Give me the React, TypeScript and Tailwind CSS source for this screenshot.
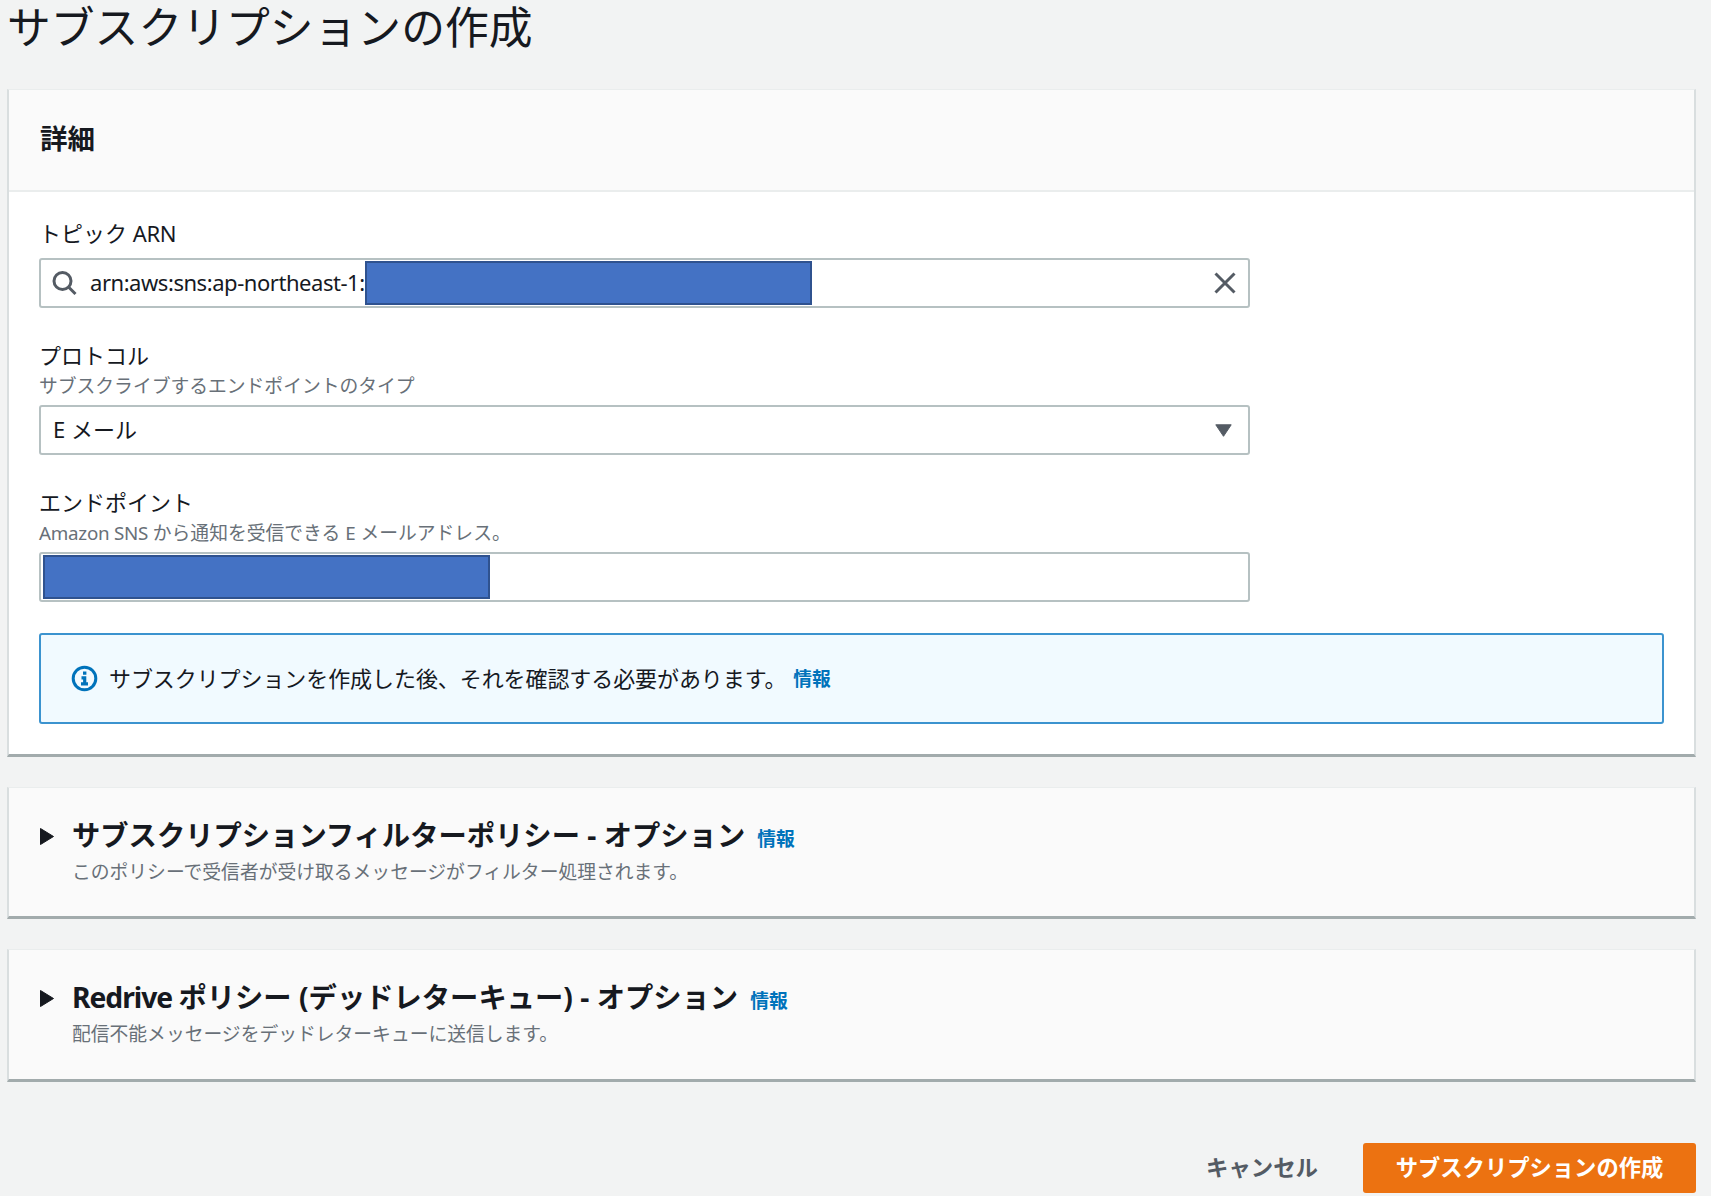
import type { ReactNode } from 'react';

function InfoLink({ className = '' }: { className?: string }) {
  return (
    <a className={`text-[18.8px] font-bold text-[#0073bb] ${className}`} href="#">
      情報
    </a>
  );
}

function Redaction() {
  return <div className="h-[44px] w-[447px] shrink-0 border-2 border-[#2f528f] bg-[#4472c4]" />;
}

function Box({ children, className = '' }: { children?: ReactNode; className?: string }) {
  return (
    <div
      className={`flex h-[50px] w-[1211px] items-center rounded-[3px] border-2 border-[#b6c1c2] bg-white ${className}`}
    >
      {children}
    </div>
  );
}

const cardClass =
  'border-x-2 border-t border-b-[3px] border-x-[#d9dedf] border-t-[#eaeded] border-b-[#a2abac]';

function Expandable({ title, description, className }: { title: ReactNode; description: string; className: string }) {
  return (
    <section className={`flex bg-[#fafafa] pl-[31px] ${cardClass} ${className}`}>
      <svg className="mt-[40px] h-[17px] w-[14px] shrink-0" viewBox="0 0 14 17" fill="#16191f">
        <path d="M.5.5 13.5 8.5.5 16.5Z" stroke="#16191f" strokeLinejoin="round" />
      </svg>
      <div className="ml-[18px] pt-[27px]">
        <div className="flex h-[41px] items-center whitespace-pre">
          <h2 className="text-[28.3px] leading-[41px] font-bold text-[#16191f]">{title}</h2>
          <InfoLink className="ml-[12px] pt-[7px]" />
        </div>
        <p className="text-[18.8px] leading-[32px] text-[#687078]">{description}</p>
      </div>
    </section>
  );
}

export default function App() {
  return (
    <main className="h-[1196px] w-[1711px] overflow-hidden bg-[#f2f3f3] pr-[15px] pl-[7px] font-['Noto_Sans','Noto_Sans_CJK_JP',sans-serif] text-[22px] text-[#16191f]">
      <h1 className="h-[89px] text-[43.8px] leading-[54px] whitespace-nowrap">サブスクリプションの作成</h1>

      <section className={`h-[668px] bg-white ${cardClass}`}>
        <header className="h-[102px] border-b-2 border-[#eaeded] bg-[#fafafa] pl-[31px]">
          <h2 className="text-[27.5px] leading-[97px] font-bold">詳細</h2>
        </header>
        <div className="px-[30px] pt-[25px]">
          <label className="block h-[41px] leading-[32px]">
            トピック <span className="tracking-[-0.4px]">ARN</span>
          </label>
          <Box className="pl-[11px]">
            <svg className="h-[26px] w-[26px] shrink-0" viewBox="0 0 26 26" fill="none" stroke="#545b64" strokeWidth="3">
              <circle cx="10.5" cy="11" r="8.5" />
              <path d="m16.5 17 7 7" />
            </svg>
            <span className="ml-[12px] w-[275px] pb-[2px] tracking-[-0.45px] whitespace-nowrap">
              arn:aws:sns:ap-northeast-1:
            </span>
            <Redaction />
            <svg className="mr-[12px] ml-auto h-[22px] w-[22px]" viewBox="0 0 22 22" stroke="#545b64" strokeWidth="3">
              <path d="m1.5 1.5 19 19m0-19-19 19" />
            </svg>
          </Box>

          <label className="mt-[31px] block h-[33px] leading-[32px]">プロトコル</label>
          <p className="h-[33px] text-[18.8px] leading-[28px] text-[#687078]">サブスクライブするエンドポイントのタイプ</p>
          <Box className="justify-between pr-[16px] pl-[12px]">
            <span className="pb-[2px]">E メール</span>
            <svg className="h-[13px] w-[17px]" viewBox="0 0 17 13" fill="#545b64" stroke="#545b64" strokeLinejoin="round">
              <path d="M.8.8h15.4L8.5 12.3Z" />
            </svg>
          </Box>

          <label className="mt-[31px] block h-[33px] leading-[32px]">エンドポイント</label>
          <p className="h-[33px] text-[18.8px] leading-[28px] text-[#687078]">
            <span className="tracking-[-0.25px]">Amazon SNS </span>から通知を受信できる E メールアドレス。
          </p>
          <Box className="pl-[2px]">
            <Redaction />
          </Box>

          <div className="mt-[31px] flex h-[91px] items-center rounded-[3px] border-2 border-[#3b93cf] bg-[#f1faff] pl-[30px]">
            <svg className="h-[27px] w-[27px]" viewBox="0 0 27 27" fill="none" stroke="#0073bb" strokeWidth="3">
              <circle cx="13.5" cy="13.5" r="11.3" />
              <path d="M12 8.2h3.4M10.5 12.8h3.2v5.7M10 18.8h7" strokeWidth="3.2" />
            </svg>
            <span className="ml-[11px] pb-px tracking-[-0.08px]">
              サブスクリプションを作成した後、それを確認する必要があります。
            </span>
            <InfoLink className="ml-[7px] pt-px" />
          </div>
        </div>
      </section>

      <Expandable
        className="mt-[30px] h-[132px]"
        title="サブスクリプションフィルターポリシー - オプション"
        description="このポリシーで受信者が受け取るメッセージがフィルター処理されます。"
      />
      <Expandable
        className="mt-[30px] h-[133px]"
        title={
          <>
            <span className="tracking-[-1.05px]">Redrive </span>ポリシー (デッドレターキュー) - オプション
          </>
        }
        description="配信不能メッセージをデッドレターキューに送信します。"
      />

      <footer className="mt-[61px] flex items-center justify-end">
        <button className="mr-[45px] pb-px text-[22.4px] font-bold text-[#545b64]">キャンセル</button>
        <button className="h-[50px] w-[333px] rounded-[3px] bg-[#ec7211] pb-px text-[22.3px] font-bold text-white">
          サブスクリプションの作成
        </button>
      </footer>
    </main>
  );
}
